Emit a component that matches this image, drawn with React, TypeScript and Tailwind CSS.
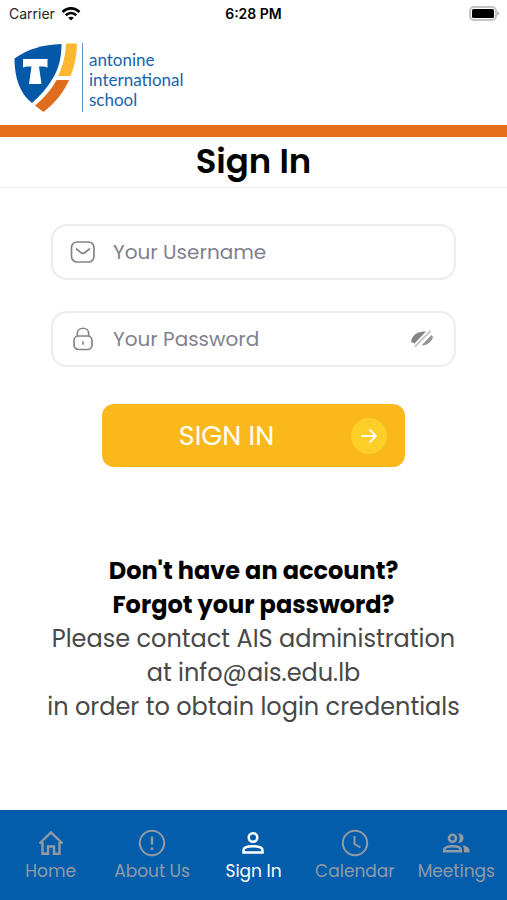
import type { ReactNode } from "react";

function Logo() {
  return (
    <div className="flex gap-1">
      <svg width="70" height="70" viewBox="14 43 70 70" role="img" aria-label="School crest">
        <path d="M14.500 58.500C28 49 43 44.500 61.500 44C61.500 57 59 68 53 78C47 88 40 96 32 103C20 94 14.500 78 14.500 58.500Z" fill="#0458a8" />
        <path d="M66 43.500H77C76.500 55 75 66 70.500 76H58C63 66 65.500 55 66 43.500Z" fill="#fcb831" />
        <path d="M56.500 80H69C64 92 55 103 43.500 112L35 105.500C44 98 51 90 56.500 80Z" fill="#e06c1e" />
        <path d="M23 59H47.500V67.500L44 66.500H39L41.500 84H29L31.500 66.500H26.500L23 67.500Z" fill="#fff" />
        <path d="M82.500 43V112" stroke="#5f93c6" strokeWidth="1" />
      </svg>
      <p className="pt-[7px] pl-px font-[Lato,sans-serif] text-[17px] leading-5 text-[#1763ad]">
        antonine
        <br />
        international
        <br />
        school
      </p>
    </div>
  );
}

function StatusBar() {
  return (
    <div className="grid h-7 grid-cols-3 items-center px-2 font-[Inter,sans-serif] text-sm text-[#222]">
      <div className="flex items-center gap-1.5 pl-px">
        <span>Carrier</span>
        <svg width="20" height="16" viewBox="0 0 20 16" fill="none" stroke="#000" strokeWidth="2.600" aria-hidden="true">
          <path d="M1.500 6C6.500 1.200 13.500 1.200 18.500 6M4.700 9.300C7.800 6.400 12.200 6.400 15.300 9.300" />
          <path d="M10 14.500L7.200 11.800C8.800 10.400 11.200 10.400 12.800 11.800Z" fill="#000" stroke="none" />
        </svg>
      </div>
      <span className="text-center font-semibold text-black">6:28 PM</span>
      <svg className="justify-self-end" width="31" height="16" viewBox="0 0 31 16" aria-hidden="true">
        <rect x="2" y="1" width="26" height="13" rx="4" fill="#fff" stroke="#c4c4c4" strokeWidth="2" />
        <rect x="4" y="3" width="22" height="9" rx="1.500" fill="#000" />
        <path d="M29.300 5.500C31.500 6 31.500 9 29.300 9.500Z" fill="#aaa" />
      </svg>
    </div>
  );
}

function Field({ id, label, type, icon, children }: { id: string; label: string; type: string; icon: ReactNode; children?: ReactNode }) {
  return (
    <div className="flex h-14 items-center gap-4 rounded-2xl border-2 border-[#ececec] px-3.5">
      <label htmlFor={id} aria-label={label}>{icon}</label>
      <input id={id} type={type} placeholder={label} className="min-w-0 flex-1 bg-transparent text-xl leading-7 text-[#303030] outline-none placeholder:text-[#7f808e]" />
      {children}
    </div>
  );
}

const navItems = [
  {
    label: "Home",
    icon: <path d="M2.500 14.500L14 3.500L25.500 14.500M5.500 13V24.800H11V17.500H17V24.800H22.500V13" strokeWidth="2.400" />,
  },
  {
    label: "About Us",
    icon: (
      <>
        <circle cx="14" cy="14" r="12.200" />
        <path d="M14 7.500V15.500M14 18.500V21" strokeWidth="2.400" />
      </>
    ),
  },
  {
    label: "Sign In",
    icon: (
      <>
        <circle cx="14" cy="8.500" r="4.300" strokeWidth="2.500" />
        <path d="M4.500 23.500V21C4.500 16 23.500 16 23.500 21V23.500Z" strokeWidth="2.500" />
      </>
    ),
  },
  {
    label: "Calendar",
    icon: (
      <>
        <circle cx="14" cy="14" r="12.200" />
        <path d="M13.500 7V15L19.500 18.500" />
      </>
    ),
  },
  {
    label: "Meetings",
    icon: (
      <>
        <circle cx="10.500" cy="9.300" r="3.500" strokeWidth="2.600" />
        <path d="M2.200 22.300V21C2.200 16 18.800 16 18.800 21V22.300Z" strokeWidth="2.600" />
        <path d="M16 4.700C23.500 3.500 23.500 15 16 14C18.300 11.500 18.300 7.500 16 4.700ZM20 16C25 17 27.500 19 27.500 21V23.600H22V20.500C22 18.500 21.500 17.200 20 16Z" fill="currentColor" stroke="none" />
      </>
    ),
  },
];

export default function App() {
  return (
    <div className="flex min-h-screen flex-col bg-white font-[Poppins,Inter,sans-serif]">
      <StatusBar />
      <header className="border-b-12 border-[#e36e1b] px-3.5 pt-[15px] pb-3">
        <Logo />
      </header>
      <h1 className="border-b border-[#f1f1f1] pb-0.5 text-center text-[34px] leading-12 font-semibold text-black">Sign In</h1>
      <main className="flex flex-1 flex-col px-10 pt-9">
        <form className="flex flex-col px-[11px]" onSubmit={(event) => event.preventDefault()}>
          <div className="flex flex-col gap-[31px]">
            <Field
              id="username"
              label="Your Username"
              type="text"
              icon={
                <svg width="30" height="30" viewBox="0 0 30 30" fill="none" stroke="#858585" strokeWidth="1.700" strokeLinecap="round" strokeLinejoin="round" aria-hidden="true">
                  <rect x="4.500" y="5" width="22.500" height="20" rx="5.500" />
                  <path d="M9.500 12L14 15.700Q15.800 17 17.600 15.700L22.500 12" />
                </svg>
              }
            />
            <Field
              id="password"
              label="Your Password"
              type="password"
              icon={
                <svg width="30" height="30" viewBox="0 0 30 30" fill="none" stroke="#858585" strokeWidth="1.700" strokeLinecap="round" aria-hidden="true">
                  <rect x="7" y="12" width="18" height="13.500" rx="4.500" />
                  <path d="M10.300 12V9.500C10.300 2.500 21.700 2.500 21.700 9.500V12M16 18V20" />
                </svg>
              }
            >
              <button type="button" aria-label="Show password" className="p-1">
                <svg width="26" height="20" viewBox="0 0 26 20" aria-hidden="true">
                  <path d="M1 12.500C2 6 8 2 16 2.500L4.500 14.500Q2.500 14 1 12.500Z" fill="#858585" />
                  <path d="M21.500 6L11.500 16.500C17 16.500 21 13 23 8.500Q22.500 7 21.500 6Z" fill="#929292" />
                  <path d="M5 17.500L20.500 2" stroke="#c4c4c4" strokeWidth="1.800" />
                </svg>
              </button>
            </Field>
          </div>
          <button type="submit" className="mx-[51px] mt-[37px] flex h-[63px] items-center rounded-xl bg-[#fab81a] px-4.5 text-white">
            <span className="flex-1 pr-4.5 text-center text-[27px] leading-8">SIGN IN</span>
            <span className="flex size-9 items-center justify-center rounded-full bg-[#fcce28]">
              <svg width="20" height="20" viewBox="0 0 20 20" fill="none" stroke="currentColor" strokeWidth="1.800" strokeLinecap="round" strokeLinejoin="round" aria-hidden="true">
                <path d="M3 10H17M11 4L17 10L11 16" />
              </svg>
            </span>
          </button>
        </form>
        <section className="mt-[87px] text-center text-2xl leading-[34px] whitespace-nowrap text-[#484848]">
          <h2 className="font-bold text-black">
            Don't have an account?
            <br />
            Forgot your password?
          </h2>
          <p>
            Please contact AIS administration
            <br />
            at info@ais.edu.lb
            <br />
            in order to obtain login credentials
          </p>
        </section>
      </main>
      <nav aria-label="Main" className="grid h-[90px] grid-cols-5 bg-[#035dab] pt-[19px]">
        {navItems.map(({ label, icon }) => (
          <a
            key={label}
            href="#"
            aria-current={label === "Sign In" ? "page" : undefined}
            className={`flex flex-col items-center gap-1 text-[17px] leading-5 ${label === "Sign In" ? "text-white" : "text-[#929ba4]"}`}
          >
            <svg width="28" height="28" viewBox="0 0 28 28" fill="none" stroke="currentColor" strokeWidth="2" aria-hidden="true">
              {icon}
            </svg>
            {label}
          </a>
        ))}
      </nav>
    </div>
  );
}
